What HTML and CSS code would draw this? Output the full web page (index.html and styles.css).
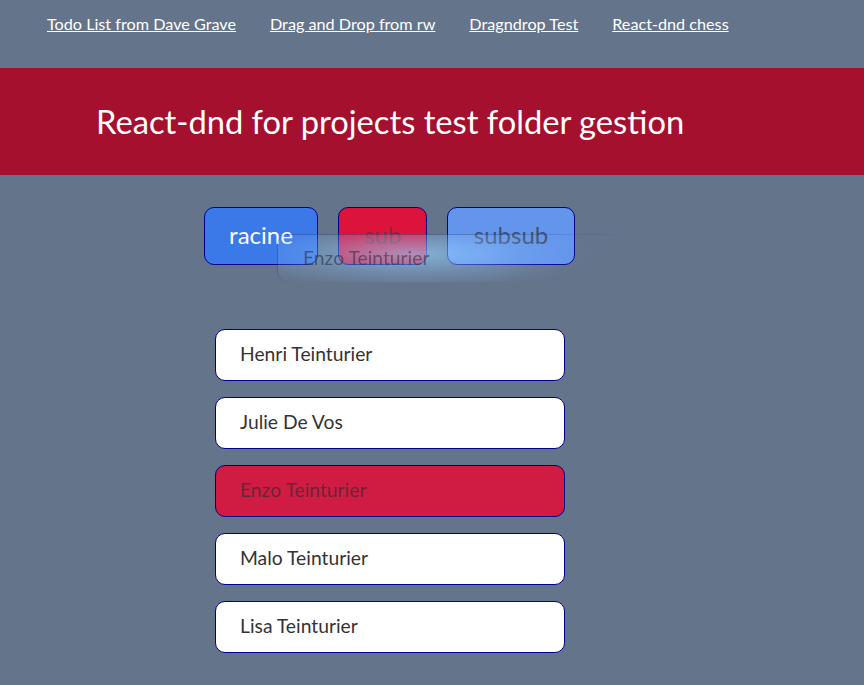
FILE: index.html
```html
<!DOCTYPE html>
<html>
<head>
<meta charset="utf-8">
<link rel="stylesheet" href="styles.css">
</head>
<body>
<nav class="nav">
  <a href="#">Todo List from Dave Grave</a>
  <a href="#">Drag and Drop from rw</a>
  <a href="#">Dragndrop Test</a>
  <a href="#">React-dnd chess</a>
</nav>
<header class="banner">
  <h1>React-dnd for projects test folder gestion</h1>
</header>
<main class="main">
  <div class="folders">
    <div class="folder folder-racine">racine</div>
    <div class="folder folder-sub">sub</div>
    <div class="folder folder-subsub">subsub</div>
    <div class="ghost">Enzo Teinturier</div>
  </div>
  <ul class="people">
    <li class="person">Henri Teinturier</li>
    <li class="person">Julie De Vos</li>
    <li class="person person-dragging">Enzo Teinturier</li>
    <li class="person">Malo Teinturier</li>
    <li class="person">Lisa Teinturier</li>
  </ul>
</main>
</body>
</html>
```
FILE: styles.css
```css
html, body {
  margin: 0;
  padding: 0;
}
body {
  background: #64748b;
  font-family: "Lato", "Noto Sans", sans-serif;
  min-height: 685px;
}
.nav {
  display: flex;
  gap: 34px;
  padding: 14px 0 0 47px;
  height: 68px;
  box-sizing: border-box;
}
.nav a {
  color: #ffffff;
  font-size: 16.2px;
  line-height: 20px;
  text-decoration: underline;
}
.banner {
  background: #a6102f;
  height: 107px;
  display: flex;
  align-items: center;
  padding-left: 96px;
}
.banner h1 {
  margin: 0;
  color: #ffffff;
  font-weight: 400;
  font-size: 32.7px;
  letter-spacing: 0;
}
.main {
  padding-top: 32px;
}
.folders {
  position: relative;
  display: flex;
  gap: 20px;
  margin-left: 204px;
}
.folder {
  height: 58px;
  box-sizing: border-box;
  border: 1px solid #00008b;
  border-radius: 10px;
  display: flex;
  align-items: center;
  justify-content: center;
  font-size: 24px;
  padding: 0 20px 4px;
}
.folder-racine {
  background: #3b78e8;
  color: #ffffff;
  width: 114px;
}
.folder-sub {
  background: #dc143c;
  color: rgba(60, 60, 60, 0.6);
  width: 89px;
}
.folder-subsub {
  background: #6495ed;
  color: rgba(40, 40, 40, 0.65);
  width: 128px;
}
.ghost {
  position: absolute;
  left: 73px;
  top: 27px;
  width: 352px;
  height: 48px;
  box-sizing: border-box;
  padding: 11px 0 0 25px;
  font-size: 19.3px;
  color: rgba(40, 40, 60, 0.55);
  border-radius: 10px;
  border-left: 1px solid rgba(40, 60, 120, 0.35);
  border-top: 1px solid rgba(40, 60, 120, 0.35);
  background: radial-gradient(ellipse 55% 75% at 38% 40%, rgba(150, 210, 255, 0.65), rgba(140, 190, 240, 0.3) 55%, rgba(100, 116, 139, 0) 100%);
  -webkit-mask-image: linear-gradient(to right, #000 60%, transparent 100%);
  mask-image: linear-gradient(to right, #000 60%, transparent 100%);
}
.people {
  list-style: none;
  margin: 64px 0 0 215px;
  padding: 0;
  display: flex;
  flex-direction: column;
  gap: 16px;
  width: 350px;
}
.person {
  height: 52px;
  box-sizing: border-box;
  border: 1px solid #00008b;
  border-radius: 10px;
  background: #ffffff;
  color: #333333;
  font-size: 19.3px;
  display: flex;
  align-items: center;
  padding: 0 0 3px 24px;
}
.person-dragging {
  background: #d01c42;
  color: rgba(60, 40, 50, 0.7);
}
```
